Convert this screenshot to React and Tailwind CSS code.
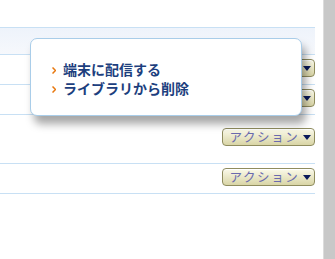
const FONT = { fontFamily: '"Noto Sans CJK JP", "Liberation Sans", sans-serif' }

function ActionButton() {
  return (
    <button
      type="button"
      className="flex items-center justify-center gap-[4px] w-[93px] h-[18px] rounded-[4px] border border-[#8f8c5e] bg-gradient-to-b from-[#fbfaea] to-[#d9d5a6] text-[12.5px] leading-none text-[#6a6aae] shadow-[inset_0_1px_0_#fff] pl-[4px]"
    >
      <span className="tracking-[1.6px]">アクション</span>
      <svg width="8" height="5" viewBox="0 0 8 5">
        <path d="M0 0h8L4 5z" fill="#0a1a5a" />
      </svg>
    </button>
  )
}

function Row({ h, top }) {
  return (
    <div className={`flex justify-end border-b border-[#c8e0f4] ${h}`}>
      <div className={top}>
        <ActionButton />
      </div>
    </div>
  )
}

function Chevron() {
  return (
    <svg width="4" height="7" viewBox="0 0 4 7" className="shrink-0 mt-[1px]">
      <path d="M0.5 0.5L3.5 3.5L0.5 6.5" fill="none" stroke="#e8780e" strokeWidth="1.5" />
    </svg>
  )
}

export default function App() {
  return (
    <div className="flex w-[335px] h-[259px] bg-white overflow-hidden" style={FONT}>
      <div className="relative w-[315px]">
        <div className="h-[28px] border-b border-[#c8e0f4]" />
        <div className="h-[27px] border-b border-[#c8e0f4] bg-gradient-to-b from-[#eef3fb] to-[#f6f8fc]" />
        <Row h="h-[30px]" top="pt-[4px]" />
        <Row h="h-[30px]" top="pt-[4px]" />
        <Row h="h-[49px]" top="pt-[13px]" />
        <Row h="h-[30px]" top="pt-[4px]" />

        {/* popup menu */}
        <div className="absolute left-[30px] top-[38px] w-[272px] h-[78px] rounded-[7px] border border-[#a9cde9] bg-white shadow-[4px_8px_8px_rgba(0,0,0,0.35)] pl-[21px] pt-[22px]">
          <ul className="flex flex-col gap-[2px] text-[14px] leading-[17px] font-bold text-[#1d3f7e]">
            <li className="flex items-center gap-[7px]">
              <Chevron />
              端末に配信する
            </li>
            <li className="flex items-center gap-[7px]">
              <Chevron />
              ライブラリから削除
            </li>
          </ul>
        </div>
      </div>
      <div className="w-[8px]" />
      <div className="w-[12px] bg-[#c8c8c8] border-l border-[#dcdcdc]" />
    </div>
  )
}
